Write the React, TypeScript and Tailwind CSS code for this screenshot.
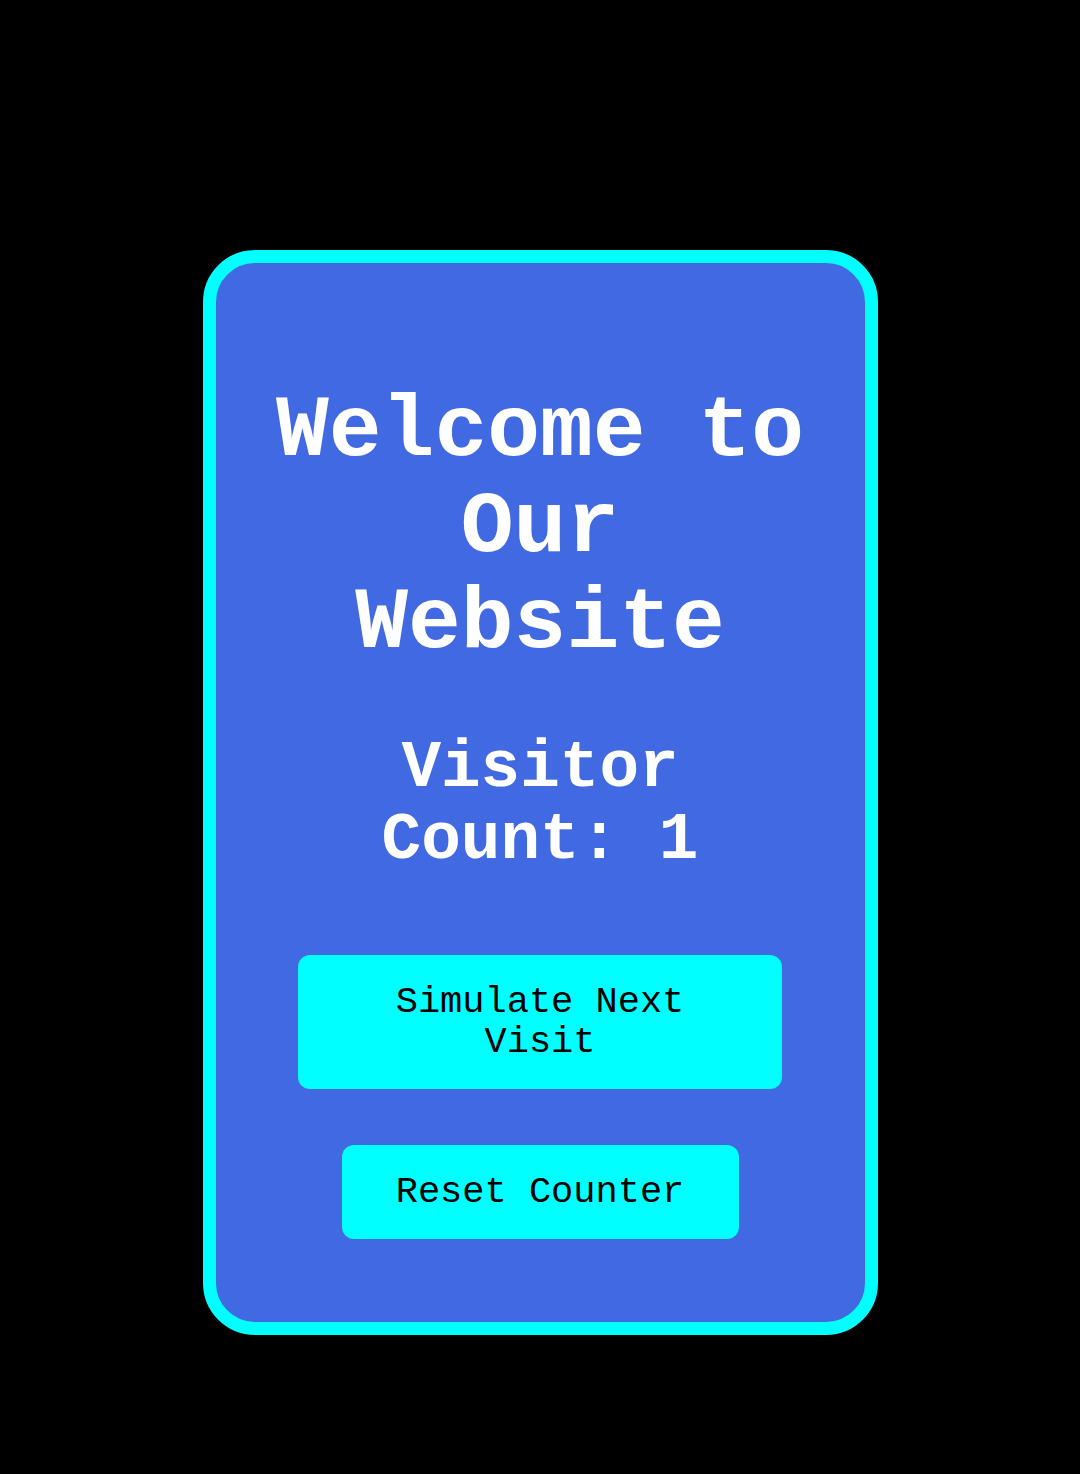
import { useState } from 'react';

const mono = "font-['Liberation_Mono','Courier_New',monospace]";

const App = () => {
	const [count, setCount] = useState(1);

	return (
		<div className={`min-h-[1474px] w-full bg-black pt-[250px] ${mono}`}>
			<div className="mx-auto flex h-[1085px] w-[675px] flex-col items-center rounded-[52px] border-[13px] border-[#00ffff] bg-[#4169e1] px-[44px] pt-[121px] text-center">
				<h1 className="text-[88px] leading-[96px] font-bold text-white">Welcome to Our Website</h1>

				<h2 className="mt-[61px] w-[500px] text-[66px] leading-[72px] font-bold text-white">
					{`Visitor Count: ${count}`}
				</h2>

				<button
					onClick={() => setCount(count + 1)}
					className="mt-[78px] w-[484px] rounded-[12px] bg-[#00ffff] px-[53px] py-[27px] text-[37px] leading-[40px] text-black"
				>
					Simulate Next Visit
				</button>

				<button
					onClick={() => setCount(1)}
					className="mt-[56px] w-[397px] rounded-[12px] bg-[#00ffff] px-[53px] py-[27px] text-[37px] leading-[40px] text-black"
				>
					Reset Counter
				</button>
			</div>
		</div>
	);
};

export default App;
